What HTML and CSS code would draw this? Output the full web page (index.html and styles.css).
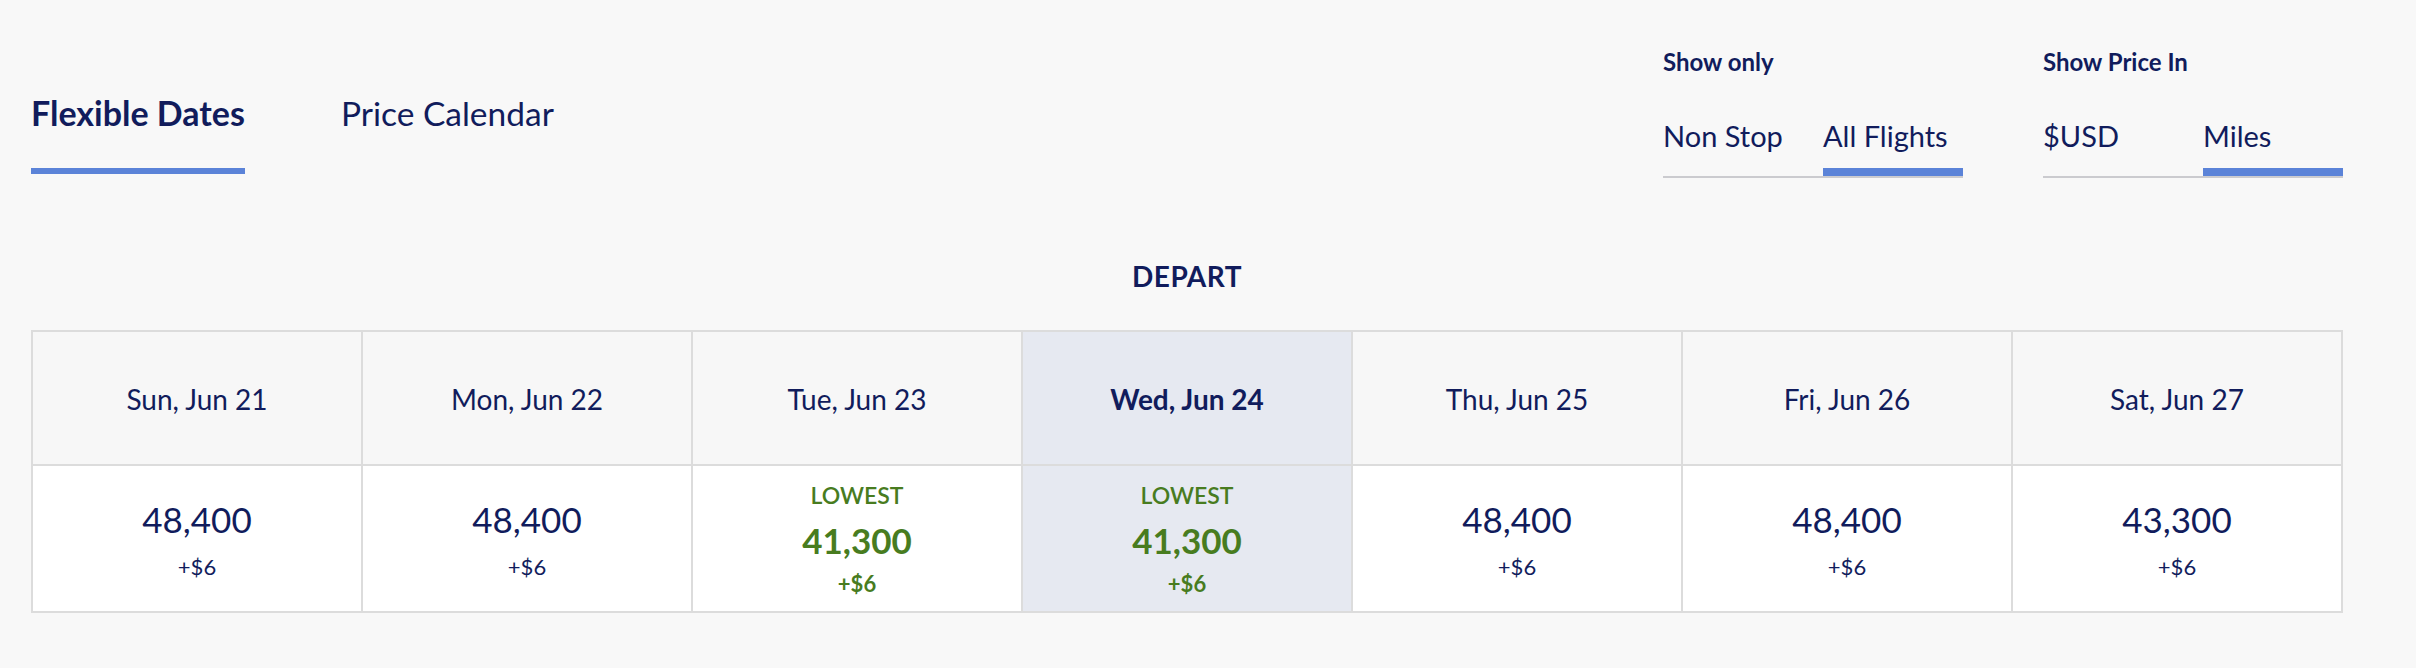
FILE: index.html
```html
<!DOCTYPE html>
<html lang="en">
<head>
<meta charset="utf-8">
<title>Flexible Dates</title>
<link rel="stylesheet" href="styles.css">
</head>
<body>
<div class="page">
  <div class="topbar">
    <nav class="tabs">
      <div class="tab active">Flexible Dates</div>
      <div class="tab">Price Calendar</div>
    </nav>
    <div class="filters">
      <div class="filter-group">
        <div class="filter-label">Show only</div>
        <div class="options">
          <div class="option">Non Stop</div>
          <div class="option active">All Flights</div>
        </div>
      </div>
      <div class="filter-group">
        <div class="filter-label">Show Price In</div>
        <div class="options">
          <div class="option">$USD</div>
          <div class="option active">Miles</div>
        </div>
      </div>
    </div>
  </div>

  <h2 class="section-title">DEPART</h2>

  <div class="grid">
    <div class="cell head">Sun, Jun 21</div>
    <div class="cell head">Mon, Jun 22</div>
    <div class="cell head">Tue, Jun 23</div>
    <div class="cell head selected">Wed, Jun 24</div>
    <div class="cell head">Thu, Jun 25</div>
    <div class="cell head">Fri, Jun 26</div>
    <div class="cell head">Sat, Jun 27</div>

    <div class="cell price"><div class="miles">48,400</div><div class="fee">+$6</div></div>
    <div class="cell price"><div class="miles">48,400</div><div class="fee">+$6</div></div>
    <div class="cell price lowest"><div class="tag">LOWEST</div><div class="miles">41,300</div><div class="fee">+$6</div></div>
    <div class="cell price lowest selected"><div class="tag">LOWEST</div><div class="miles">41,300</div><div class="fee">+$6</div></div>
    <div class="cell price"><div class="miles">48,400</div><div class="fee">+$6</div></div>
    <div class="cell price"><div class="miles">48,400</div><div class="fee">+$6</div></div>
    <div class="cell price"><div class="miles">43,300</div><div class="fee">+$6</div></div>
  </div>
</div>
</body>
</html>
```

FILE: styles.css
```css
* { box-sizing: border-box; }

html, body {
  margin: 0;
  padding: 0;
  background: #f8f8f8;
}

body {
  font-family: Lato, "Open Sans", "Liberation Sans", sans-serif;
  color: #111c5c;
}

.page {
  padding: 0 73px 0 31px;
}

.topbar {
  display: flex;
  justify-content: space-between;
  align-items: flex-start;
}

.tabs {
  display: flex;
  gap: 96px;
  padding-top: 93px;
}

.tab {
  font-size: 34px;
  line-height: 1.2;
  padding-bottom: 34px;
  border-bottom: 6px solid transparent;
  white-space: nowrap;
}

.tab + .tab {
  font-size: 33.5px;
}

.tab.active {
  font-weight: 700;
  border-bottom-color: #5b83d8;
}

.filters {
  display: flex;
  gap: 80px;
  padding-top: 48px;
}

.filter-label {
  font-size: 24px;
  line-height: 1.2;
  font-weight: 700;
  margin-bottom: 42px;
}

.options {
  display: grid;
  grid-template-columns: 160px 140px;
  border-bottom: 2px solid #cbcbcf;
}

.option {
  font-size: 29px;
  line-height: 1.2;
  padding-bottom: 14px;
  border-bottom: 8px solid transparent;
  white-space: nowrap;
}

.option.active {
  border-bottom-color: #5b83d8;
}

.section-title {
  margin: 82px 0 37px;
  text-align: center;
  font-size: 28px;
  line-height: 1.2;
  font-weight: 700;
  letter-spacing: 0.5px;
}

.grid {
  display: grid;
  grid-template-columns: repeat(7, 1fr);
  gap: 2px;
  border: 2px solid #dcdcdc;
  background: #dcdcdc;
}

.cell {
  display: flex;
  flex-direction: column;
  align-items: center;
  justify-content: center;
  text-align: center;
}

.head {
  height: 132px;
  background: #f7f7f7;
  font-size: 28px;
  line-height: 1.2;
  padding-top: 3px;
}

.head.selected {
  font-weight: 700;
}

.price {
  height: 145px;
  background: #ffffff;
  padding-top: 2px;
}

.cell.selected {
  background: #e6e9f1;
}

.miles {
  font-size: 35px;
  line-height: 1.2;
}

.fee {
  font-size: 22px;
  line-height: 1.2;
  margin-top: 14px;
}

.lowest {
  color: #487c1f;
}

.tag {
  font-size: 23px;
  line-height: 1.2;
  font-weight: 600;
  margin-bottom: 10px;
}

.lowest .miles {
  font-weight: 700;
}

.lowest .fee {
  font-weight: 700;
  margin-top: 10px;
}
```
